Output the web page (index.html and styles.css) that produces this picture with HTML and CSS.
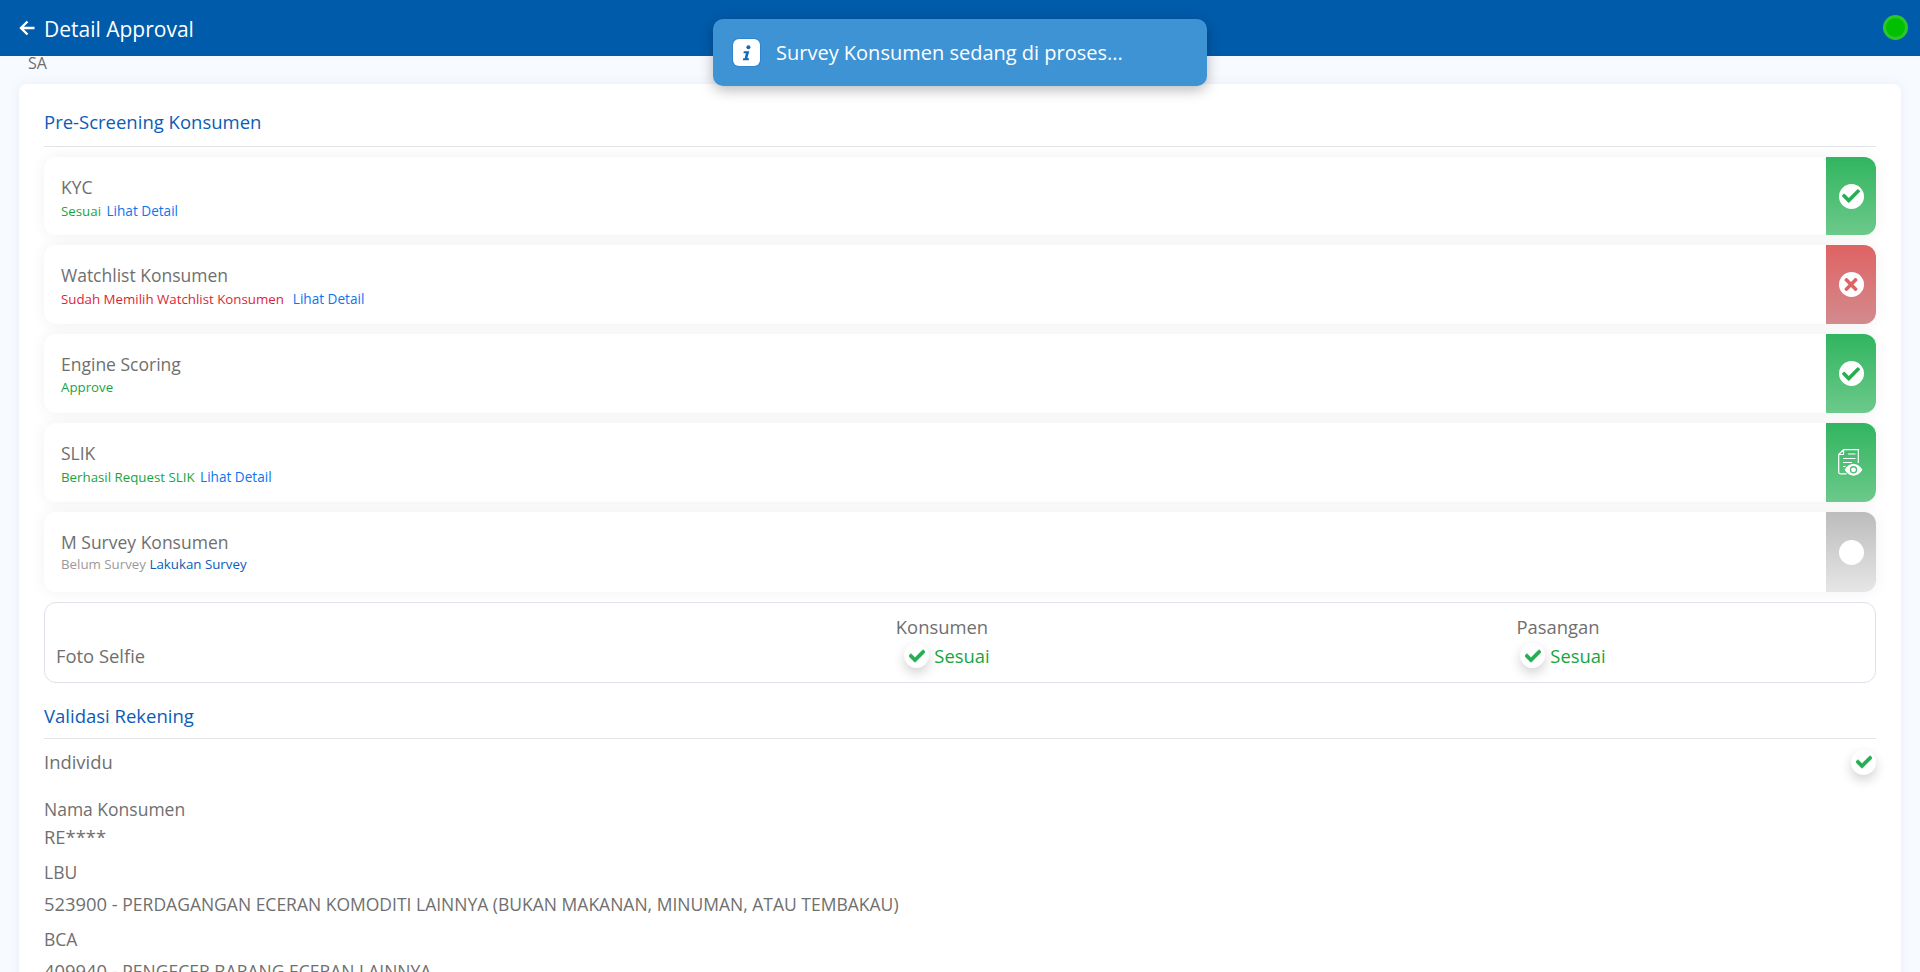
FILE: index.html
```html
<!DOCTYPE html>
<html lang="id">
<head>
    <meta charset="UTF-8">
    <meta name="viewport" content="width=device-width, initial-scale=1.0">
    <title>Detail Approval</title>
    <link rel="stylesheet" href="styles.css">
</head>
<body>
<svg class="sprite" aria-hidden="true">
    <symbol id="ic-check" viewBox="0 0 512 512">
        <path d="M173.898 439.404l-166.4-166.4c-9.997-9.997-9.997-26.206 0-36.204l36.203-36.204c9.997-9.998 26.207-9.998 36.204 0L192 312.69 432.095 72.596c9.997-9.997 26.207-9.997 36.204 0l36.203 36.204c9.997 9.997 9.997 26.206 0 36.204l-294.4 294.401c-9.998 9.997-26.207 9.997-36.204-.001z"/>
    </symbol>
    <symbol id="ic-times" viewBox="0 0 352 512">
        <path d="M242.72 256l100.07-100.07c12.28-12.28 12.28-32.19 0-44.48l-22.24-22.24c-12.28-12.28-32.19-12.28-44.48 0L176 189.28 75.93 89.21c-12.28-12.28-32.19-12.28-44.48 0L9.21 111.45c-12.28 12.28-12.28 32.19 0 44.48L109.28 256 9.21 356.07c-12.28 12.28-12.28 32.19 0 44.48l22.24 22.24c12.28 12.28 32.2 12.28 44.48 0L176 322.72l100.07 100.07c12.28 12.28 32.2 12.28 44.48 0l22.24-22.24c12.28-12.28 12.28-32.19 0-44.48L242.72 256z"/>
    </symbol>
</svg>

<header class="topbar">
    <svg class="back-icon" viewBox="0 0 16 16"><path d="M15.500 8H2M8.500 1.500 2 8l6.500 6.500"/></svg>
    <span class="topbar-title">Detail Approval</span>
    <span class="status-dot"></span>
</header>

<div class="toast">
    <span class="toast-icon">
        <svg viewBox="0 0 16 20"><circle cx="9.6" cy="3.4" r="2.3"/><path d="M4.4 8h6.2L8.4 16h2l-.5 2.4H3.2l.5-2.4h1.7l1.3-5.6H3.9z"/></svg>
    </span>
    <span>Survey Konsumen sedang di proses...</span>
</div>

<main class="page">
    <div class="initials">SA</div>
    <section class="card">
        <h3 class="section-title">Pre-Screening Konsumen</h3>

        <div class="check-row row-first">
            <div class="check-body">
                <div class="check-name">KYC</div>
                <div class="check-sub"><span class="txt-green">Sesuai</span> <a class="txt-link">Lihat Detail</a></div>
            </div>
            <div class="check-side side-green">
                <span class="side-circle"><svg class="ic-green"><use href="#ic-check"/></svg></span>
            </div>
        </div>

        <div class="check-row">
            <div class="check-body">
                <div class="check-name">Watchlist Konsumen</div>
                <div class="check-sub"><span class="txt-red">Sudah Memilih Watchlist Konsumen</span> &nbsp;<a class="txt-link">Lihat Detail</a></div>
            </div>
            <div class="check-side side-red">
                <span class="side-circle"><svg class="ic-red"><use href="#ic-times"/></svg></span>
            </div>
        </div>

        <div class="check-row">
            <div class="check-body">
                <div class="check-name">Engine Scoring</div>
                <div class="check-sub"><span class="txt-green">Approve</span></div>
            </div>
            <div class="check-side side-green">
                <span class="side-circle"><svg class="ic-green"><use href="#ic-check"/></svg></span>
            </div>
        </div>

        <div class="check-row">
            <div class="check-body">
                <div class="check-name">SLIK</div>
                <div class="check-sub"><span class="txt-green">Berhasil Request SLIK</span> <a class="txt-link">Lihat Detail</a></div>
            </div>
            <div class="check-side side-green">
                <svg class="doc-icon" viewBox="0 0 25 27">
                    <path class="doc-line" d="M5.500 .7h14.800v13.300M5.500 .7 .7 5.500v17.800q0 1.500 1.500 1.500h6.300M5.500 .7v4.800H.7M10 5h7.500M5 9.500h12.500M5 13.500h9M5 17.500h2.500"/>
                    <path class="doc-eye" fill-rule="evenodd" d="M6.500 20.800c2.300-3.900 5.900-6 9-6s6.700 2.100 9 6c-2.300 3.900-5.900 6-9 6s-6.700-2.100-9-6zm9-3.700a3.700 3.700 0 1 0 0 7.400 3.700 3.700 0 0 0 0-7.400zm0 1.300a2.400 2.400 0 1 1 0 4.800 2.400 2.400 0 0 1 0-4.800z"/>
                </svg>
            </div>
        </div>

        <div class="check-row row-survey">
            <div class="check-body">
                <div class="check-name">M Survey Konsumen</div>
                <div class="check-sub sub-tight"><span class="txt-grey">Belum Survey</span> <a class="txt-navy">Lakukan Survey</a></div>
            </div>
            <div class="check-side side-grey">
                <span class="side-circle"></span>
            </div>
        </div>

        <div class="selfie-box">
            <div class="selfie-label">Foto Selfie</div>
            <div class="selfie-col">
                <div class="selfie-head">Konsumen</div>
                <div class="selfie-status">
                    <span class="mini-circle"><svg class="ic-green"><use href="#ic-check"/></svg></span>
                    <span class="txt-green">Sesuai</span>
                </div>
            </div>
            <div class="selfie-col">
                <div class="selfie-head">Pasangan</div>
                <div class="selfie-status">
                    <span class="mini-circle"><svg class="ic-green"><use href="#ic-check"/></svg></span>
                    <span class="txt-green">Sesuai</span>
                </div>
            </div>
        </div>

        <h3 class="section-title title-second">Validasi Rekening</h3>

        <div class="account-head">
            <span>Individu</span>
            <span class="mini-circle"><svg class="ic-green"><use href="#ic-check"/></svg></span>
        </div>

        <div class="field-label label-first">Nama Konsumen</div>
        <div class="field-value value-tight"><b>RE****</b></div>
        <div class="field-label">LBU</div>
        <div class="field-value"><b>523900 -</b> PERDAGANGAN ECERAN KOMODITI LAINNYA (BUKAN MAKANAN, MINUMAN, ATAU TEMBAKAU)</div>
        <div class="field-label label-tight">BCA</div>
        <div class="field-value"><b>409940 -</b> PENGECER BARANG ECERAN LAINNYA</div>
    </section>
</main>
</body>
</html>
```

FILE: styles.css
```css
* {
    box-sizing: border-box;
}
html, body {
    height: 100%;
    margin: 0;
    overflow: hidden;
}
body {
    font-family: "Open Sans", "Noto Sans", sans-serif;
    font-size: 17.5px;
    line-height: 1.5;
    color: #6f6f6f;
    background: #f7faff;
}
.sprite {
    display: none;
}

/* header */
.topbar {
    display: flex;
    align-items: center;
    height: 56px;
    padding: 0 12px 0 19px;
    background: #005baa;
    color: #fff;
}
.back-icon {
    width: 16px;
    height: 16px;
    margin-right: 9px;
    fill: none;
    stroke: #fff;
    stroke-width: 2.4;
}
.topbar-title {
    font-size: 21px;
    font-weight: 500;
    margin-top: 4px;
}
.status-dot {
    width: 25px;
    height: 25px;
    margin-left: auto;
    margin-top: -2px;
    border-radius: 50%;
    background: #00c000;
    border: 3px solid #2cc52c;
}

/* toast */
.toast {
    position: absolute;
    top: 19px;
    left: 713px;
    width: 494px;
    height: 67px;
    display: flex;
    align-items: center;
    gap: 16px;
    padding-left: 20px;
    border-radius: 10px;
    background: #3d93d4;
    color: #fff;
    font-size: 20px;
    box-shadow: 0 4px 14px rgba(0, 0, 0, .28);
}
.toast-icon {
    display: flex;
    align-items: center;
    justify-content: center;
    width: 27px;
    height: 27px;
    border-radius: 6px;
    background: #fff;
    box-shadow: 0 0 0 1px #2f86d0;
}
.toast-icon svg {
    width: 14px;
    height: 18px;
    fill: #0f6cbd;
}

/* page */
.page {
    padding: 0 19px;
}
.initials {
    height: 28px;
    padding-left: 9px;
    font-size: 16px;
    font-weight: 500;
    line-height: 14px;
}
.card {
    padding: 16px 25px 0;
    border-radius: 8px;
    background: #fff;
    box-shadow: 0 0 12px rgba(60, 80, 130, .07);
}
.section-title {
    margin: 0;
    height: 47px;
    padding-top: 10px;
    font-size: 18.5px;
    line-height: 24px;
    font-weight: 500;
    color: #0b5cb8;
    border-bottom: 1px solid #e2e4e8;
}

/* rows of the screening list */
.check-row {
    display: flex;
    height: 79px;
    margin-top: 10px;
    border-radius: 12px;
    background: #fff;
    box-shadow: 0 0 16px rgba(0, 0, 0, .06);
}
.row-first {
    height: 78px;
}
.row-survey {
    height: 80px;
}
.check-body {
    flex: 1;
    padding: 16px 17px 0;
}
.check-name {
    line-height: 28px;
}
.check-sub {
    font-size: 13.3px;
    font-weight: 500;
    line-height: 19px;
}
.sub-tight {
    margin-top: -1px;
}
.txt-link {
    margin-left: 2px;
    font-size: 13.6px;
}
.check-side {
    display: flex;
    align-items: center;
    justify-content: center;
    width: 50px;
    border-radius: 0 12px 12px 0;
}
.side-green {
    background: linear-gradient(#31b55f, #6cc98b);
}
.side-red {
    background: linear-gradient(#df6363, #d38a8d);
}
.side-grey {
    background: linear-gradient(#bcbcbc, #e6e6e6);
}
.side-circle {
    display: flex;
    align-items: center;
    justify-content: center;
    width: 25px;
    height: 25px;
    border-radius: 50%;
    background: #fff;
}
.side-circle svg {
    width: 18px;
    height: 18px;
}
.side-circle .ic-red {
    height: 19px;
}
.doc-icon {
    width: 25px;
    height: 27px;
    margin-right: 1px;
}
.doc-line {
    fill: none;
    stroke: #fff;
    stroke-width: 1.2;
}
.doc-eye {
    fill: #fff;
    stroke: #4cbd74;
    stroke-width: .8;
    paint-order: stroke;
}
.ic-green {
    fill: #27ae55;
}
.ic-red {
    fill: #df6363;
}
.txt-green {
    color: #17a53f;
}
.txt-red {
    color: #dc1f35;
}
.txt-grey {
    color: #9a9a9a;
}
.txt-link {
    color: #0a76ef;
}
.txt-navy {
    color: #0b5cb8;
}

/* foto selfie */
.selfie-box {
    display: grid;
    grid-template-columns: 1fr 616px 616px;
    height: 81px;
    margin-top: 10px;
    padding: 0 9px 0 11px;
    border: 1px solid #dfe2ea;
    border-radius: 12px;
    font-size: 18.4px;
}
.selfie-label {
    align-self: end;
    padding-bottom: 12px;
}
.selfie-col {
    text-align: center;
    padding-top: 10px;
}
.selfie-head {
    line-height: 27px;
}
.selfie-status {
    display: flex;
    align-items: center;
    justify-content: center;
    gap: 5px;
    margin-top: 3px;
    padding-left: 10px;
    line-height: 25px;
}
.mini-circle {
    display: flex;
    align-items: center;
    justify-content: center;
    width: 25px;
    height: 25px;
    border-radius: 50%;
    background: #fff;
    box-shadow: 0 5px 12px rgba(0, 0, 0, .18);
}
.mini-circle svg {
    width: 16px;
    height: 16px;
    stroke: #27ae55;
    stroke-width: 30;
}

/* validasi rekening */
.title-second {
    height: 46px;
    margin-top: 10px;
    padding-top: 11px;
}
.account-head {
    display: flex;
    align-items: center;
    justify-content: space-between;
    height: 46px;
    font-size: 18.4px;
}
.field-label {
    margin-top: 10px;
    line-height: 27px;
}
.label-first {
    margin-top: 11px;
}
.label-tight {
    margin-top: 8px;
}
.field-value {
    margin-top: 4px;
    line-height: 27px;
}
.value-tight {
    margin-top: 0;
    margin-bottom: -2px;
}
.field-value b {
    font-size: 18.4px;
    font-weight: 500;
}
```
